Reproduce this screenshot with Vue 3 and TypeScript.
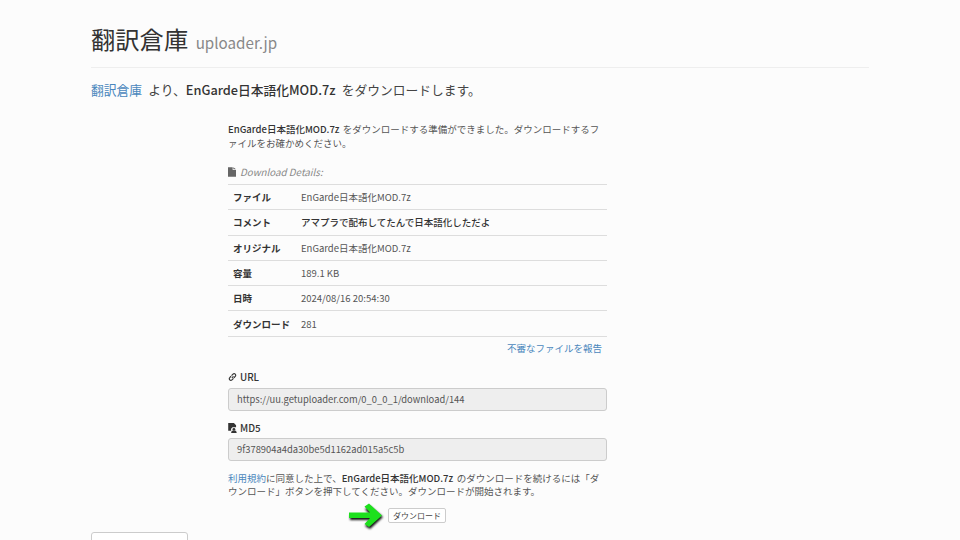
<script setup lang="ts">
const rows: { label: string; value: string; strong?: boolean }[] = [
  { label: 'ファイル', value: 'EnGarde日本語化MOD.7z' },
  { label: 'コメント', value: 'アマプラで配布してたんで日本語化しただよ', strong: true },
  { label: 'オリジナル', value: 'EnGarde日本語化MOD.7z' },
  { label: '容量', value: '189.1 KB' },
  { label: '日時', value: '2024/08/16 20:54:30' },
  { label: 'ダウンロード', value: '281' },
]
</script>

<template>
  <div class="page">
    <header class="head">
      <h1 class="title">翻訳倉庫 <small class="sub">uploader.jp</small></h1>
    </header>
    <p class="lead"><a class="link">翻訳倉庫</a> より、<b>EnGarde日本語化MOD.7z</b> をダウンロードします。</p>

    <main class="col">
      <p class="intro"><b>EnGarde日本語化MOD.7z</b> をダウンロードする準備ができました。ダウンロードするファイルをお確かめください。</p>

      <div class="caption">
        <svg class="ico" viewBox="0 0 12 14" width="8" height="10"><path fill="#666" d="M0 0h7v4h5v10H0zM8 0l4 3H8z" /></svg>
        <em>Download Details:</em>
      </div>
      <table class="details">
        <tbody>
          <tr v-for="r in rows" :key="r.label">
            <th>{{ r.label }}</th>
            <td :class="{ strong: r.strong }">{{ r.value }}</td>
          </tr>
        </tbody>
      </table>
      <div class="report"><a class="link">不審なファイルを報告</a></div>

      <label class="field-label">
        <svg class="ico" viewBox="0 0 14 14" width="9" height="10"><path fill="none" stroke="#333" stroke-width="1.800" d="M6 8.500 8.500 6M5.500 5 7.800 2.600a2.400 2.400 0 0 1 3.500 3.400L9.200 8.200M8.600 9.200 6.200 11.500A2.400 2.400 0 0 1 2.700 8l2.100-2.200" /></svg>
        URL
      </label>
      <div class="input">https://uu.getuploader.com/0_0_0_1/download/144</div>

      <label class="field-label second">
        <svg class="ico" viewBox="0 0 12 14" width="9" height="10"><path fill="#333" d="M0 0h8l3 3v3H6L4 8v3H0z" /><circle cx="8" cy="9" r="2" fill="#333" /><path fill="#333" d="M4 14l1-3h6l1 3z" /></svg>
        MD5
      </label>
      <div class="input">9f378904a4da30be5d1162ad015a5c5b</div>

      <p class="terms"><a class="link">利用規約</a>に同意した上で、<b>EnGarde日本語化MOD.7z</b> のダウンロードを続けるには「ダウンロード」ボタンを押下してください。ダウンロードが開始されます。</p>

      <div class="action">
        <svg class="arrow" viewBox="0 0 40 28" width="40" height="28">
          <path class="arrow-shadow" d="M2 12h20l-5-6 5-3 13 11-13 12-5-3 5-6H2z" />
          <path class="arrow-body" d="M1 9.500h21l-5.500-6 4.500-3 13 12-13 11.500-4.500-3 5.500-6H1z" />
        </svg>
        <button class="btn" type="button">ダウンロード</button>
      </div>
    </main>

    <div class="bottom-box"></div>
  </div>
</template>

<style>
html, body { margin: 0; background: #fcfcfc; }
</style>

<style scoped>
.page {
  width: 778px;
  height: 540px;
  margin: 0 auto;
  overflow: hidden;
  font-family: "Noto Sans CJK JP", "Noto Sans", sans-serif;
  color: #555;
  box-sizing: border-box;
}
.head { height: 68px; border-bottom: 1px solid #eee; box-sizing: border-box; padding-top: 21px; }
.title { margin: 0; font-size: 24.300px; font-weight: 400; line-height: 36px; color: #333; }
.sub { font-size: 15.200px; color: #888; margin-left: 2px; }
.link { color: #4a87bd; }
.lead { margin: 12px 0 0; font-size: 12.750px; line-height: 19px; color: #444; word-spacing: 3.500px; }
.lead b, .intro b, .terms b { font-weight: 500; color: #333; }
.col { width: 379px; margin: 23px 0 0 137px; }
.intro { margin: 0; font-size: 9.500px; line-height: 14px; color: #555; word-spacing: 1px; }
.caption { margin-top: 15px; font-size: 9.800px; line-height: 14px; color: #888; display: flex; align-items: center; gap: 4px; }
.ico { flex: none; }
.details { width: 100%; border-collapse: collapse; margin-top: 5px; font-size: 9.500px; }
.details tr { height: 25.300px; border-top: 1px solid #ddd; }
.details tr:last-child { border-bottom: 1px solid #ddd; }
.details th { width: 73px; text-align: left; font-weight: 700; color: #333; padding: 0 0 0 5px; box-sizing: border-box; }
.details td { padding: 0; color: #555; }
.details td.strong { font-weight: 500; color: #333; }
.report { text-align: right; font-size: 9.500px; line-height: 14px; padding: 4px 5px 0 0; }
.field-label { display: flex; align-items: center; gap: 3px; margin-top: 15px; font-size: 9.800px; line-height: 14px; font-weight: 500; color: #333; }
.field-label.second { margin-top: 10px; }
.field-label + .input { margin-top: 3px; }
.field-label:not(.second) + .input { margin-top: 4px; }
.input {
  height: 23px;
  box-sizing: border-box;
  border: 1px solid #ccc;
  border-radius: 3px;
  background: #eee;
  padding: 0 8px;
  font-size: 9.400px;
  line-height: 21px;
  color: #555;
}
.terms { margin: 11px 0 0; font-size: 9.500px; line-height: 13px; color: #555; word-spacing: 1.500px; }
.action { position: relative; display: flex; justify-content: center; margin-top: 10px; padding-right: 1px; }
.btn {
  width: 58px;
  height: 15px;
  padding: 0;
  font: inherit;
  font-size: 8px;
  line-height: 13px;
  color: #444;
  background: #fff;
  border: 1px solid #ccc;
  border-radius: 2px;
  white-space: nowrap;
}
.arrow { position: absolute; left: 120px; top: -5px; }
.arrow-shadow { fill: #111; filter: blur(1px); }
.arrow-body { fill: #1de01d; }
.bottom-box {
  width: 97px;
  height: 20px;
  margin-top: 9px;
  box-sizing: border-box;
  background: #fff;
  border: 1px solid #ccc;
  border-radius: 3px;
}
</style>
